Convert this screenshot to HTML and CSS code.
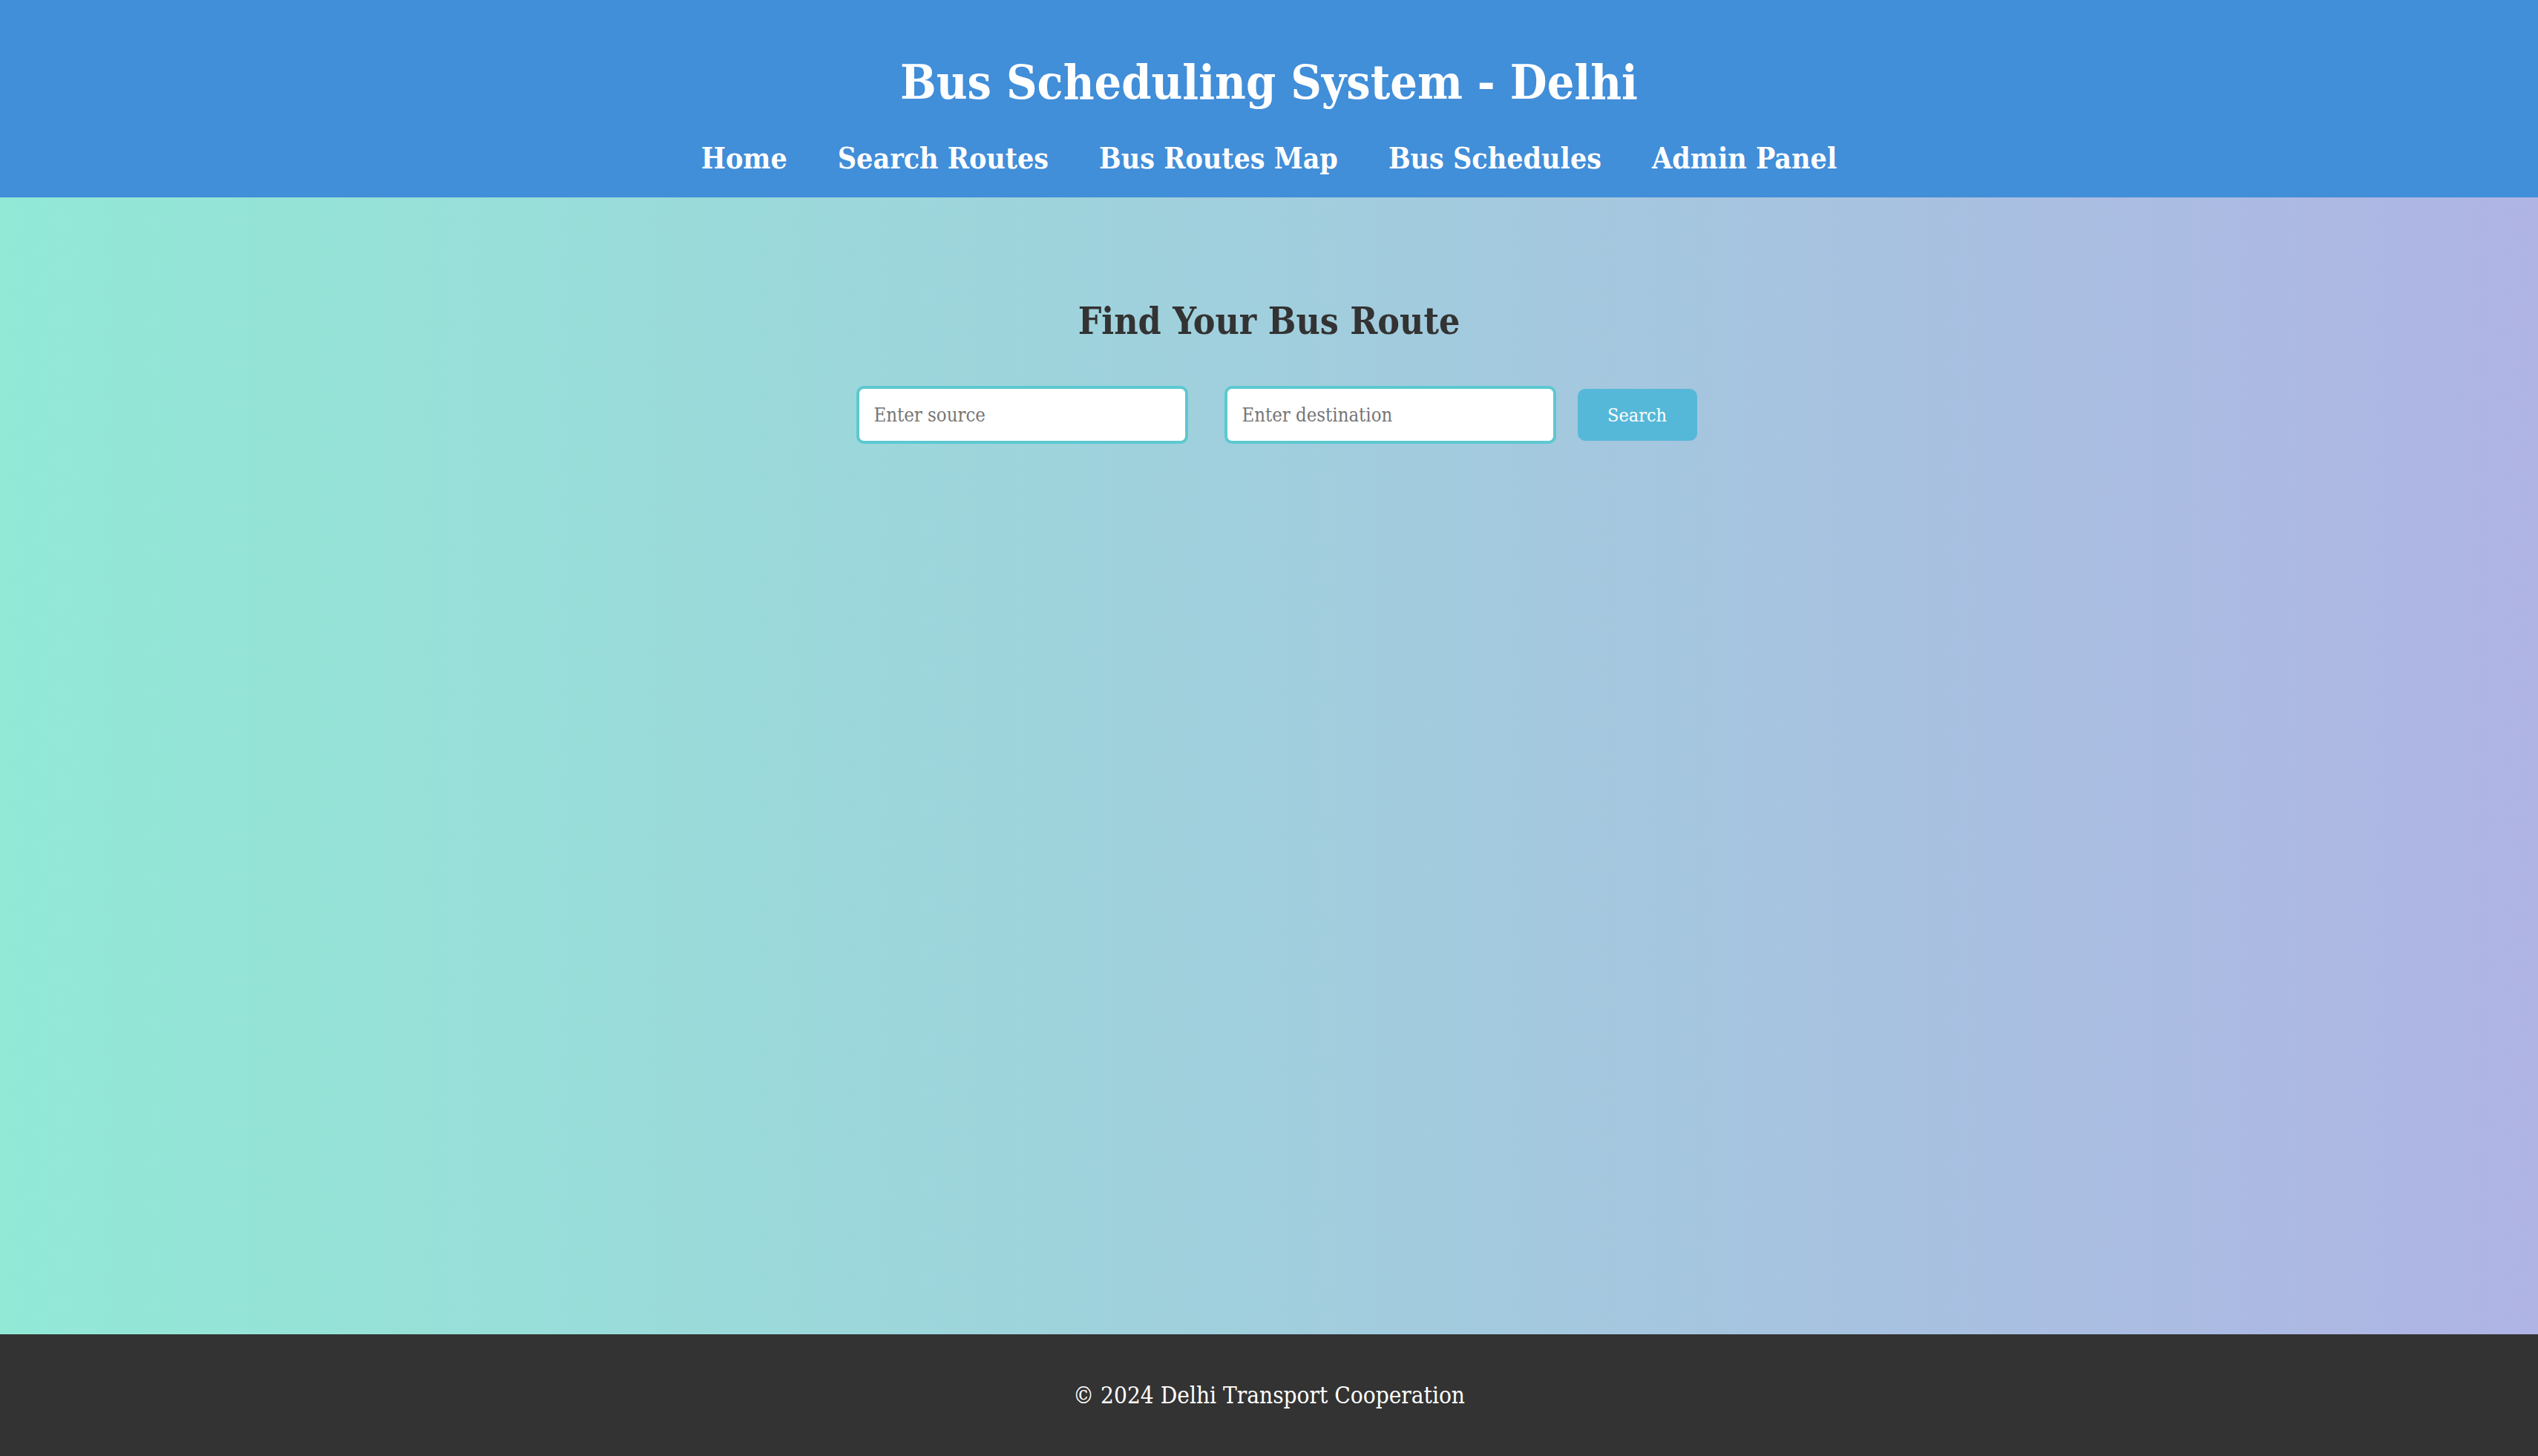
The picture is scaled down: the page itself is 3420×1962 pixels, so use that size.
FILE: index.html
```html
<!DOCTYPE html>
<html lang="en">
<head>
<meta charset="utf-8">
<title>Bus Scheduling System - Delhi</title>
<link rel="stylesheet" href="styles.css">
</head>
<body>
<header class="site-header">
  <h1 class="site-title">Bus Scheduling System - Delhi</h1>
  <nav class="site-nav">
    <a href="#" class="nav-link">Home</a>
    <a href="#" class="nav-link">Search Routes</a>
    <a href="#" class="nav-link">Bus Routes Map</a>
    <a href="#" class="nav-link">Bus Schedules</a>
    <a href="#" class="nav-link">Admin Panel</a>
  </nav>
</header>
<main class="main">
  <h2 class="section-title">Find Your Bus Route</h2>
  <form class="search-form">
    <input class="search-input" type="text" placeholder="Enter source">
    <input class="search-input" type="text" placeholder="Enter destination">
    <button class="search-button" type="button">Search</button>
  </form>
</main>
<footer class="site-footer">
  <p class="footer-text">© 2024 Delhi Transport Cooperation</p>
</footer>
</body>
</html>
```
FILE: styles.css
```css
html, body {
  margin: 0;
  padding: 0;
}
body {
  font-family: "DejaVu Serif Condensed", "DejaVu Serif", serif;
  font-stretch: condensed;
  min-height: 100vh;
  display: flex;
  flex-direction: column;
}
.site-header {
  background: #418ed9;
  color: #fff;
  height: 266px;
  box-sizing: border-box;
  padding-top: 71px;
  text-align: center;
}
.site-title {
  margin: 0;
  font-size: 64px;
  line-height: 80px;
  font-weight: bold;
}
.site-nav {
  margin-top: 37px;
  display: flex;
  justify-content: center;
  gap: 68px;
  line-height: 50px;
}
.nav-link {
  color: #fff;
  text-decoration: none;
  font-weight: bold;
  font-size: 39px;
}
.main {
  flex: 1;
  background: linear-gradient(to right, #92e9d6, #afb4e4);
  padding-top: 137px;
  text-align: center;
}
.section-title {
  margin: 0;
  font-size: 49.5px;
  line-height: 60px;
  color: #333;
  font-weight: bold;
}
.search-form {
  margin-top: 57px;
  display: flex;
  justify-content: center;
  align-items: center;
  gap: 9px;
}
.search-input {
  width: 447px;
  height: 78px;
  box-sizing: border-box;
  margin: 0 20px;
  padding: 0 20px;
  border: 4px solid #5cc8d0;
  border-radius: 10px;
  background: #fff;
  font-family: inherit;
  font-stretch: condensed;
  font-size: 25.5px;
  color: #333;
  outline: none;
}
.search-input::placeholder {
  color: #757575;
}
.search-button {
  width: 161px;
  height: 70px;
  border: none;
  border-radius: 10px;
  background: #56b8d8;
  color: #fff;
  font-family: inherit;
  font-stretch: condensed;
  font-size: 25px;
  cursor: pointer;
}
.site-footer {
  background: #333;
  color: #fff;
  height: 164px;
  display: flex;
  align-items: center;
  justify-content: center;
}
.footer-text {
  margin: 0;
  font-size: 31.3px;
}
```
